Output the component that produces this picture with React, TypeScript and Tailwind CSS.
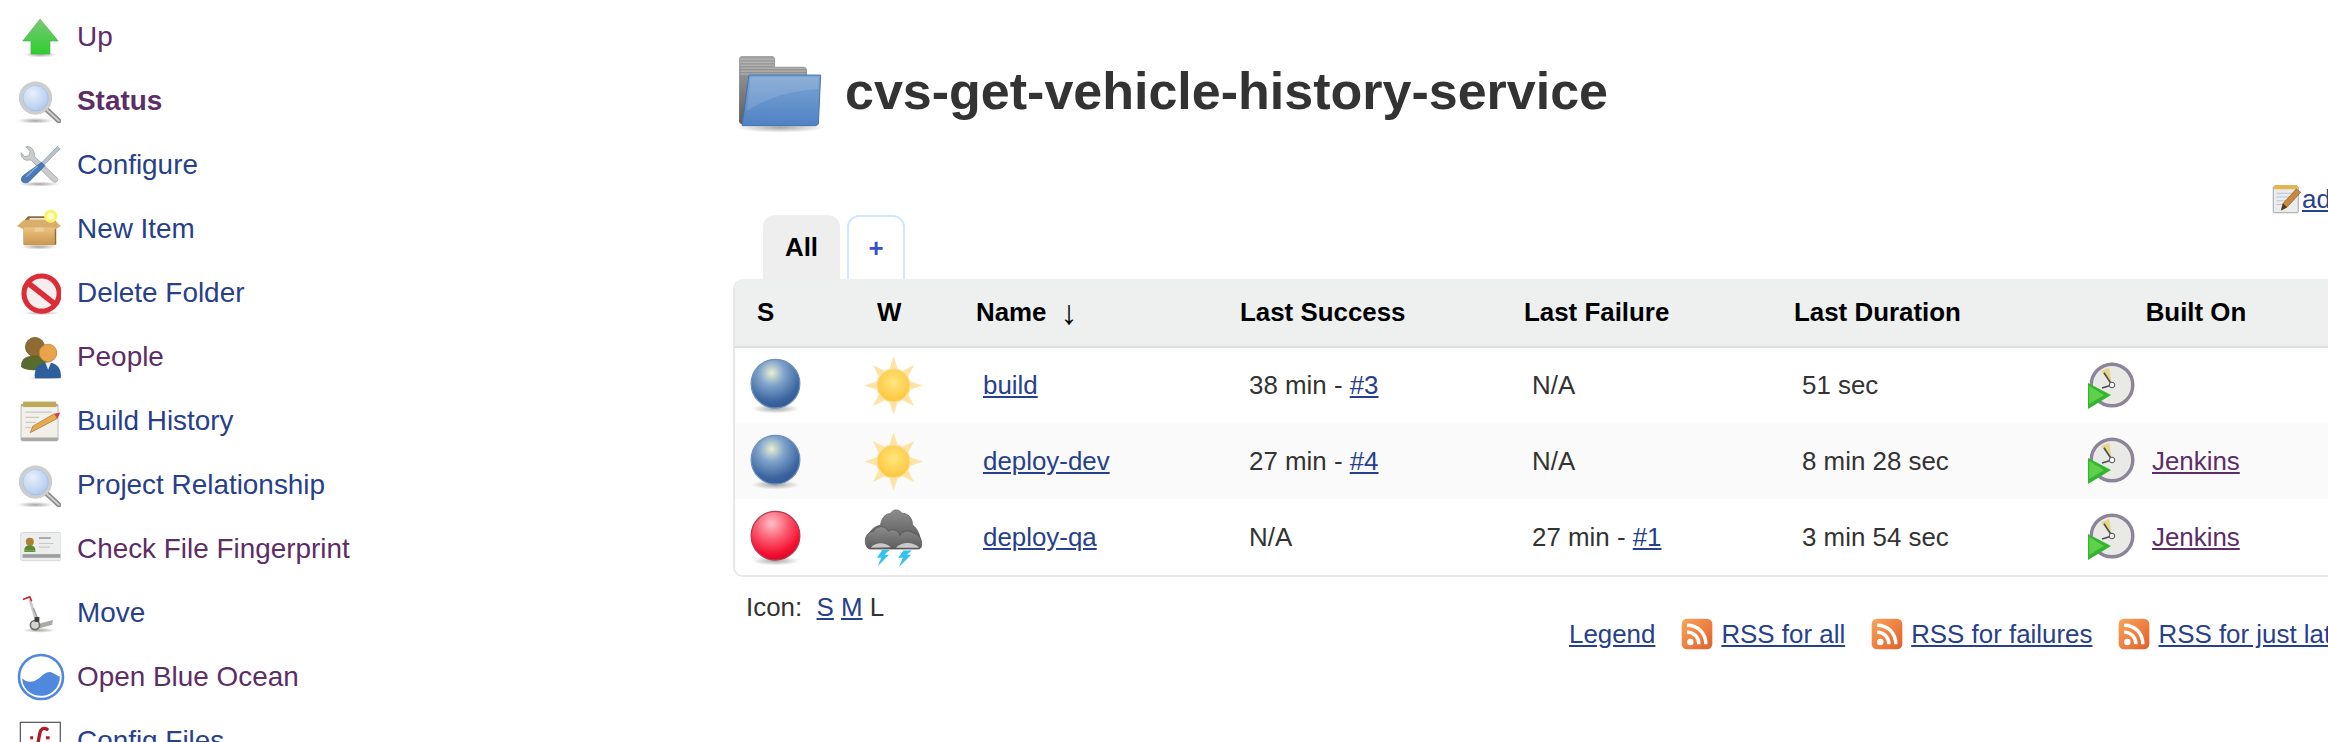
const BLUE = "text-[#27408b]";
const PURPLE = "text-[#5c2d66]";
const SIDE_ICON = "h-[44px] w-[44px] blur-[0.5px]";

function SharedDefs() {
  return (
    <svg className="block h-0 w-0" aria-hidden="true">
      <defs>
        <radialGradient id="shadow" cx="50%" cy="50%" r="50%">
          <stop offset="0%" stopColor="#000" stopOpacity="0.35" />
          <stop offset="100%" stopColor="#000" stopOpacity="0" />
        </radialGradient>
        <linearGradient id="upFill" x1="0" y1="0" x2="0" y2="1">
          <stop offset="0%" stopColor="#79c878" />
          <stop offset="100%" stopColor="#2ecf2e" />
        </linearGradient>
        <radialGradient id="lens" cx="40%" cy="35%" r="70%">
          <stop offset="0%" stopColor="#e6f0fb" />
          <stop offset="100%" stopColor="#a9c6ea" />
        </radialGradient>
        <linearGradient id="boxFill" x1="0" y1="0" x2="0" y2="1">
          <stop offset="0%" stopColor="#eec27e" />
          <stop offset="100%" stopColor="#c9964f" />
        </linearGradient>
        <radialGradient id="blueBall" cx="42%" cy="28%" r="75%">
          <stop offset="0%" stopColor="#e9efd0" />
          <stop offset="35%" stopColor="#7fa3cb" />
          <stop offset="80%" stopColor="#3a649f" />
          <stop offset="100%" stopColor="#34568f" />
        </radialGradient>
        <radialGradient id="redBall" cx="42%" cy="25%" r="75%">
          <stop offset="0%" stopColor="#ffc0c8" />
          <stop offset="45%" stopColor="#fb5a6e" />
          <stop offset="85%" stopColor="#f40e30" />
          <stop offset="100%" stopColor="#d80a2a" />
        </radialGradient>
        <radialGradient id="sunFill" cx="50%" cy="40%" r="60%">
          <stop offset="0%" stopColor="#ffe680" />
          <stop offset="100%" stopColor="#fdc63a" />
        </radialGradient>
        <linearGradient id="cloudFill" x1="0" y1="0" x2="0" y2="1">
          <stop offset="0%" stopColor="#8d8d8d" />
          <stop offset="100%" stopColor="#5c5c5c" />
        </linearGradient>
        <linearGradient id="folderFront" x1="0" y1="0" x2="0" y2="1">
          <stop offset="0%" stopColor="#7ea5d2" />
          <stop offset="100%" stopColor="#4f82c4" />
        </linearGradient>
        <linearGradient id="folderBack" x1="0" y1="0" x2="0" y2="1">
          <stop offset="0%" stopColor="#a3a3a3" />
          <stop offset="100%" stopColor="#5d5d5d" />
        </linearGradient>
        <linearGradient id="rssFill" x1="0" y1="0" x2="1" y2="1">
          <stop offset="0%" stopColor="#f9a45a" />
          <stop offset="100%" stopColor="#e0602c" />
        </linearGradient>
      </defs>
    </svg>
  );
}

function Shadow({ cx = 12, cy = 21.5, rx = 10, ry = 1.8 }) {
  return <ellipse cx={cx} cy={cy} rx={rx} ry={ry} fill="url(#shadow)" />;
}

function UpIcon() {
  return (
    <svg viewBox="0 0 24 24" className={SIDE_ICON}>
      <Shadow cx={12.8} cy={21.6} rx={9} ry={1.6} />
      <path d="M12.6 2.2 22.5 14.2 18 14.2 18 21.3 7.6 21.3 7.6 14.2 3.1 14.2Z" fill="url(#upFill)" stroke="#4ea94e" strokeWidth="0.3" />
    </svg>
  );
}

function SearchIcon() {
  return (
    <svg viewBox="0 0 24 24" className={SIDE_ICON}>
      <Shadow cx={10} cy={22.8} rx={10} ry={1.6} />
      <path d="M16 16.5 22.8 22.8" stroke="#8d8d8d" strokeWidth="2.8" strokeLinecap="round" />
      <path d="M16 16.5 22.8 22.8" stroke="#d0d0d0" strokeWidth="1" strokeLinecap="round" />
      <circle cx="10.1" cy="10.4" r="8.2" fill="url(#lens)" stroke="#cdcdcd" strokeWidth="1.8" />
      <circle cx="10.1" cy="10.4" r="6.9" fill="none" stroke="#a3bcdc" strokeWidth="0.4" />
    </svg>
  );
}

function ConfigureIcon() {
  return (
    <svg viewBox="0 0 24 24" className={SIDE_ICON}>
      <Shadow cy={22.4} rx={11} ry={1.4} />
      <path d="M8.6 3.6C7.8 2.2 6.2 1.7 4.8 2.1L7.2 4.6 6.4 7 4 7.4 2.2 5.2C2 7 3 9 5.2 9.4L7.6 9.2 19.6 21C20.8 22 22.6 21 22.2 19.4L9.6 7.4C9.6 6 9.4 4.8 8.6 3.6Z" fill="#c9cccb" stroke="#a5a9a8" strokeWidth="0.5" />
      <path d="M22.2 1.8 23.4 3.2 14.6 12.2 13.2 11Z" fill="#b9c3d0" stroke="#8e9aa8" strokeWidth="0.4" />
      <path d="M13.4 10.6 15.2 12.4 6.8 20.8C5.6 22 3.6 22 2.8 21 2 20 2.4 18.8 3.4 17.8Z" fill="#4a7bb8" stroke="#2f5a94" strokeWidth="0.4" />
      <path d="M5 18.4 11.2 12.6" stroke="#8cb0dc" strokeWidth="0.7" />
    </svg>
  );
}

function NewItemIcon() {
  return (
    <svg viewBox="0 0 24 24" className={SIDE_ICON}>
      <Shadow cy={21.8} rx={10} ry={1.4} />
      <path d="M3.6 7.6 6 5H19L21.4 8V20.6H3.6Z" fill="#8f6a3a" />
      <path d="M7 6H17L18 9H6Z" fill="#e8e3d8" />
      <path d="M0 10.4 4 7 H20L24 10.4 20.4 12.4H4Z" fill="#d9ad6c" />
      <rect x="3.6" y="11.2" width="17" height="9.6" rx="0.6" fill="url(#boxFill)" />
      <path d="M9.6 11.2H14.6V13.4H9.6Z" fill="#e9cf9e" />
      <circle cx="18.4" cy="5" r="3.6" fill="#f8f36a" />
      <circle cx="18.4" cy="5" r="1.9" fill="#fdfcc2" />
    </svg>
  );
}

function DeleteIcon() {
  return (
    <svg viewBox="0 0 24 24" className={SIDE_ICON}>
      <Shadow cx={13.4} cy={23} rx={10} ry={1} />
      <circle cx="13.4" cy="12.3" r="9.6" fill="#f4eeee" stroke="#dc2c36" strokeWidth="2.8" />
      <path d="M6.4 6.8 20.4 17.8" stroke="#dc2c36" strokeWidth="3" />
    </svg>
  );
}

function PeopleIcon() {
  return (
    <svg viewBox="0 0 24 24" className={SIDE_ICON}>
      <Shadow cx={15} cy={23.4} rx={9} ry={0.8} />
      <path d="M2.2 17C2.2 13 5 11.2 9.8 11.2 14 11.2 17 13 17 17 17 20 3 20 2.2 17Z" fill="#566b2c" />
      <circle cx="9.8" cy="6.5" r="5.2" fill="#8d6b32" stroke="#6e5224" strokeWidth="0.4" />
      <path d="M9.8 23.6C9 19.6 11 15 17 15 22 15 24.6 19 23.8 23.6Z" fill="#2f5e9c" />
      <path d="M15.4 15 17 19 18.6 15Z" fill="#eef2f7" />
      <circle cx="16.9" cy="9.8" r="4.8" fill="#e8a34c" stroke="#b97c2e" strokeWidth="0.4" />
    </svg>
  );
}

function HistoryIcon() {
  return (
    <svg viewBox="0 0 24 24" className={SIDE_ICON}>
      <rect x="2" y="2.6" width="20.6" height="20.4" rx="1" fill="#a9a9a4" />
      <rect x="2.4" y="4" width="19.8" height="17" fill="#f1f0ea" />
      <rect x="3.4" y="1.4" width="18" height="3" fill="#bda958" />
      <path d="M4.6 7.2H19M4.6 10H12M4.6 12.8H10.4M4.6 15.6H7.6" stroke="#c9c9c4" strokeWidth="0.7" />
      <path d="M7.2 18.4 8.6 14.8 20.4 8 22 10.6Z" fill="#e4ab52" stroke="#a9782c" strokeWidth="0.4" />
      <path d="M20.4 8 23.6 7.4 22 10.6Z" fill="#e0364a" />
    </svg>
  );
}

function FingerprintIcon() {
  return (
    <svg viewBox="0 0 24 24" className={SIDE_ICON}>
      <rect x="2" y="3" width="22" height="15.4" rx="1" fill="#eceded" stroke="#cfd0d0" strokeWidth="0.4" />
      <circle cx="7" cy="8" r="2.2" fill="#b07f34" />
      <path d="M4 12.8C4 10.8 5.2 10 7 10S10 10.8 10 12.8Z" fill="#5b8a2f" />
      <rect x="4" y="12.8" width="6" height="0.8" fill="#5b8a2f" />
      <path d="M12 6H18.4" stroke="#9c9c9c" strokeWidth="0.9" />
      <path d="M12 9H20M12 11H18" stroke="#c9c9c9" strokeWidth="0.6" />
      <rect x="3" y="14.8" width="20.6" height="2" fill="#9d9e9e" />
    </svg>
  );
}

function MoveIcon() {
  return (
    <svg viewBox="0 0 24 24" className={SIDE_ICON}>
      <Shadow cx={12} cy={21.4} rx={9} ry={1.4} />
      <path d="M7 4.4 10.4 16" stroke="#c9c9c9" strokeWidth="1.5" />
      <path d="M9 9.4 11.2 15" stroke="#9c9c9c" strokeWidth="0.8" />
      <path d="M3.2 4.6 7 3.2 8 5.6" fill="none" stroke="#c8283c" strokeWidth="0.9" />
      <path d="M11 18.2 19.6 15.8 19.2 18.4 12 20.4Z" fill="#a9aaa6" />
      <circle cx="9.8" cy="18.6" r="2.5" fill="#d3d4d0" stroke="#6e6f6b" strokeWidth="0.9" />
      <rect x="9.6" y="14.2" width="2.6" height="2.6" fill="#3f3f3f" />
    </svg>
  );
}

function OceanIcon() {
  return (
    <svg viewBox="0 0 24 24" className="h-[48px] w-[48px]">
      <circle cx="12" cy="12" r="11" fill="#fff" stroke="#4f88dc" strokeWidth="1.3" />
      <path d="M2.6 12.6C5 15 8 15 11 12.6 13 11 15 9 17 9.6 19 10.2 20 11.6 21.4 11.6 21.6 17 17.4 21.4 12 21.4 6.6 21.4 2.6 17.4 2.6 12.6Z" fill="#4f88dc" />
    </svg>
  );
}

function ConfigFilesIcon() {
  return (
    <svg viewBox="0 0 24 24" className="h-[44px] w-[44px]">
      <rect x="1.8" y="1.8" width="21.8" height="22" fill="#fff" stroke="#444" strokeWidth="0.6" />
      <path d="M16.4 5.6C14.4 4.4 12.8 5.4 12.4 8L10.6 17.6C10.2 20 8.8 20.8 7 19.6" fill="none" stroke="#b01c22" strokeWidth="1.8" strokeLinecap="round" />
      <path d="M7.2 10.2H8.8M15.8 10.2H17.8" stroke="#b01c22" strokeWidth="1.6" />
    </svg>
  );
}

function FolderIcon() {
  return (
    <svg viewBox="0 0 48 48" className="h-[89px] w-[89px] blur-[0.4px]">
      <ellipse cx="24.5" cy="41.8" rx="24" ry="2.8" fill="url(#shadow)" />
      <path d="M2.2 4.6C2.2 3.8 3 3.2 4 3.2H20C21 3.2 21.6 4 21.6 5V9H37C38.2 9 38.8 9.8 38.8 11V15H7V40H4C3 40 2.2 39.4 2.2 38.6Z" fill="url(#folderBack)" />
      <path d="M3 5H21M3 6.6H21M3 8.2H21M3 9.8H38M3 11.4H38M3 13H38" stroke="#bcbcbc" strokeWidth="0.5" />
      <path d="M7.5 13.5H46.2L45 39.4C44.9 40.2 44.2 40.8 43.4 40.8H3.8Z" fill="url(#folderFront)" stroke="#3e6fb0" strokeWidth="0.5" />
      <path d="M8.4 14.6H45.2L44.8 21C30 22 16 26 6.4 33Z" fill="#fff" fillOpacity="0.12" />
    </svg>
  );
}

function Ball({ color }: { color: "blue" | "red" }) {
  return (
    <svg viewBox="0 0 32 32" className="h-[59px] w-[59px]">
      <ellipse cx="16" cy="28.6" rx="13" ry="2.6" fill="url(#shadow)" />
      <circle
        cx="16"
        cy="15"
        r="13.2"
        fill={color === "blue" ? "url(#blueBall)" : "url(#redBall)"}
        stroke={color === "blue" ? "#6d8fbe" : "#b63a50"}
        strokeWidth="0.7"
      />
    </svg>
  );
}

function SunIcon() {
  const rays = [0, 45, 90, 135, 180, 225, 270, 315];
  return (
    <svg viewBox="0 0 32 32" className="h-[59px] w-[59px]">
      {rays.map((angle) => (
        <path
          key={angle}
          d="M16 0.2 18.4 7.4H13.6Z"
          fill="#fde3a6"
          transform={`rotate(${angle} 16 16)`}
        />
      ))}
      <circle cx="16" cy="16" r="9.4" fill="#fde3a6" />
      <circle cx="16" cy="16" r="8.6" fill="url(#sunFill)" stroke="#fdd06a" strokeWidth="0.4" />
    </svg>
  );
}

function StormIcon() {
  return (
    <svg viewBox="0 0 32 32" className="h-[59px] w-[59px] blur-[0.3px]">
      <g transform="translate(-0.5 -1) scale(1.05 1.28)">
        <path d="M9 8C9.6 4.6 12 3 14 3.2 15.4 1.2 18.4 1 20 3 23 2.8 25.6 5 25.6 8 28 9.4 29.8 12.6 29.4 14.6L3 14.6C2.2 12 4 9 9 8Z" fill="url(#cloudFill)" stroke="#555" strokeWidth="0.3" />
        <path d="M1.2 15.4C0.8 12.6 3 10.6 5.4 10.8 7 8 11.6 8 13 10.6 15 9.4 18.4 10 19 12.4 20 10.4 24 9.8 26 11.4 29 11.8 30.6 14 30.2 16.8 30 18 29 18.2 28 18.2H4C2.4 18.2 1.4 17 1.2 15.4Z" fill="url(#cloudFill)" stroke="#4a4a4a" strokeWidth="0.3" />
        <path d="M4 17.6C6 15.4 11 15 14.4 17.4ZM17 17.6C20 15 26 15 29 17.6Z" fill="#c9c9c9" />
      </g>
      <path d="M10 22.6 7 27H9.4L7.4 31.6 13.6 25.4H11L14 22.6Z" fill="#34c2ee" />
      <path d="M21.4 23 18.6 27H21L19 32 25.6 25.4H23.2L26 23Z" fill="#34c2ee" />
    </svg>
  );
}

function ClockIcon() {
  return (
    <svg viewBox="0 0 24 24" className="h-[48px] w-[48px] shrink-0 blur-[0.5px]">
      <circle cx="12" cy="11.5" r="10.4" fill="#e9e9e6" stroke="#8c8499" strokeWidth="1.7" />
      <path d="M12 11.5 10.6 3 6.4 4.6Z" fill="#e4d68a" />
      <path d="M12 11.5 8 5.4M12 11.5 7 13" stroke="#4d4d4d" strokeWidth="0.8" />
      <circle cx="12" cy="11.5" r="1.4" fill="#fff" stroke="#555" strokeWidth="0.5" />
      <path d="M0 10.5 11.5 16.5 0 23.5Z" fill="#33b52f" />
      <path d="M0.6 12 8 16.5 0.6 21Z" fill="#5ed04a" />
    </svg>
  );
}

function NotepadIcon() {
  return (
    <svg viewBox="0 0 24 24" className="h-[30px] w-[30px] shrink-0">
      <rect x="1" y="2" width="20" height="21" rx="1" fill="#e9edf0" stroke="#999" strokeWidth="0.7" />
      <rect x="1.6" y="0.8" width="18.8" height="3.4" rx="1" fill="#e3b654" />
      <path d="M3.6 7.4H18M3.6 10.4H14M3.6 13.4H11M3.6 16.4H9" stroke="#bcc4cc" strokeWidth="0.8" />
      <path d="M7.4 21 8.8 15.6 19.4 4 23 6.6 12 18.6Z" fill="#c9893a" stroke="#7c5420" strokeWidth="0.5" />
      <path d="M7.4 21 8.8 15.6 12 18.6Z" fill="#50361a" />
    </svg>
  );
}

function RssIcon() {
  return (
    <svg viewBox="0 0 24 24" className="h-[32px] w-[32px] shrink-0">
      <rect x="0.5" y="0.5" width="23" height="23" rx="4" fill="url(#rssFill)" />
      <circle cx="7" cy="18" r="2.4" fill="#fff" />
      <path d="M4.6 10.6C9.6 10.6 13.4 14.4 13.4 19.6" fill="none" stroke="#fff" strokeWidth="2.6" />
      <path d="M4.6 5.4C12.6 5.4 18.6 11.4 18.6 19.6" fill="none" stroke="#fff" strokeWidth="2.6" />
    </svg>
  );
}

const sideItems = [
  { label: "Up", icon: <UpIcon />, color: PURPLE },
  { label: "Status", icon: <SearchIcon />, color: PURPLE, bold: true },
  { label: "Configure", icon: <ConfigureIcon />, color: BLUE },
  { label: "New Item", icon: <NewItemIcon />, color: BLUE },
  { label: "Delete Folder", icon: <DeleteIcon />, color: BLUE },
  { label: "People", icon: <PeopleIcon />, color: PURPLE },
  { label: "Build History", icon: <HistoryIcon />, color: BLUE },
  { label: "Project Relationship", icon: <SearchIcon />, color: BLUE },
  { label: "Check File Fingerprint", icon: <FingerprintIcon />, color: PURPLE },
  { label: "Move", icon: <MoveIcon />, color: BLUE },
  { label: "Open Blue Ocean", icon: <OceanIcon />, color: PURPLE },
  { label: "Config Files", icon: <ConfigFilesIcon />, color: BLUE },
];

function Sidebar() {
  return (
    <div className="flex w-[733px] shrink-0 flex-col pt-[5px] pl-[17px] text-[27.9px]">
      {sideItems.map((item) => (
        <div key={item.label} className="flex h-[64px] shrink-0 items-center">
          <div className="flex w-[60px] shrink-0 items-center">{item.icon}</div>
          <span className={`${item.color} ${item.bold ? "font-bold" : ""}`}>
            {item.label}
          </span>
        </div>
      ))}
    </div>
  );
}

function Link({ children, color = BLUE }: { children: React.ReactNode; color?: string }) {
  return <a className={`${color} underline`}>{children}</a>;
}

function BuiltOn({ node }: { node?: string }) {
  return (
    <div className="flex items-center gap-[16px]">
      <ClockIcon />
      {node && <Link color={PURPLE}>{node}</Link>}
    </div>
  );
}

const rows = [
  {
    name: "build",
    ball: "blue" as const,
    weather: <SunIcon />,
    success: <>38 min - <Link>#3</Link></>,
    failure: <>N/A</>,
    duration: "51 sec",
    node: undefined,
  },
  {
    name: "deploy-dev",
    ball: "blue" as const,
    weather: <SunIcon />,
    success: <>27 min - <Link>#4</Link></>,
    failure: <>N/A</>,
    duration: "8 min 28 sec",
    node: "Jenkins",
  },
  {
    name: "deploy-qa",
    ball: "red" as const,
    weather: <StormIcon />,
    success: <>N/A</>,
    failure: <>27 min - <Link>#1</Link></>,
    duration: "3 min 54 sec",
    node: "Jenkins",
  },
];

function JobTable() {
  const headerCell = "pl-[16px] text-left font-bold text-black";
  return (
    <div className="w-[1700px] overflow-hidden rounded-[10px] border-2 border-t-0 border-[#e8e8e8]">
      <table className="w-full table-fixed border-collapse text-[25.9px] text-[#333]">
        <colgroup>
          <col className="w-[126px]" />
          <col className="w-[99px]" />
          <col className="w-[264px]" />
          <col className="w-[284px]" />
          <col className="w-[270px]" />
          <col className="w-[302px]" />
          <col className="w-[232px]" />
          <col />
        </colgroup>
        <thead>
          <tr className="h-[68px] border-b-2 border-[#dcdfdf] bg-[#eef0f0]">
            <th className="pl-[22px] text-left font-bold text-black">S</th>
            <th className={headerCell}>W</th>
            <th className={headerCell}>
              <span className="flex items-center">
                Name
                <span className="ml-[14px] text-[34px] leading-none font-normal">↓</span>
              </span>
            </th>
            <th className={headerCell}>Last Success</th>
            <th className={headerCell}>Last Failure</th>
            <th className={headerCell}>Last Duration</th>
            <th className="text-center font-bold text-black">Built On</th>
            <th />
          </tr>
        </thead>
        <tbody>
          {rows.map((row, index) => (
            <tr key={row.name} className={`h-[76px] ${index === 1 ? "bg-[#fafafa]" : "bg-white"}`}>
              <td className="pl-[11px]">
                <Ball color={row.ball} />
              </td>
              <td className="pl-[3px]">{row.weather}</td>
              <td className="pl-[23px]">
                <Link>{row.name}</Link>
              </td>
              <td className="pl-[25px]">{row.success}</td>
              <td className="pl-[24px]">{row.failure}</td>
              <td className="pl-[24px]">{row.duration}</td>
              <td className="pl-[8px]">
                <BuiltOn node={row.node} />
              </td>
              <td />
            </tr>
          ))}
        </tbody>
      </table>
    </div>
  );
}

function Tabs() {
  return (
    <div className="ml-[30px] flex h-[64px] gap-[7px] text-[25.9px]">
      <div className="flex w-[77px] items-center justify-center rounded-t-[12px] bg-[#eeeeee] font-bold text-black">
        All
      </div>
      <div className="flex w-[58px] items-center justify-center rounded-t-[12px] border-2 border-b-0 border-[#cfe8ff] font-bold text-[#3b4fd1]">
        +
      </div>
    </div>
  );
}

function Footer() {
  return (
    <div className="flex whitespace-nowrap text-[25.9px] text-[#333]">
      <div className="w-[836px] shrink-0 pt-[11px] pl-[13px]">
        Icon: &nbsp;<Link>S</Link> <Link>M</Link> L
      </div>
      <div className="flex shrink-0 items-center pt-[38px]">
        <Link>Legend</Link>
        <div className="ml-[26px] flex items-center gap-[8px]">
          <RssIcon />
          <Link>RSS for all</Link>
        </div>
        <div className="ml-[26px] flex items-center gap-[8px]">
          <RssIcon />
          <Link>RSS for failures</Link>
        </div>
        <div className="ml-[26px] flex items-center gap-[8px]">
          <RssIcon />
          <Link>RSS for just latest builds</Link>
        </div>
      </div>
    </div>
  );
}

export default function App() {
  return (
    <div className="flex h-[742px] w-[2328px] overflow-hidden bg-white font-['Liberation_Sans',Arial,sans-serif]">
      <SharedDefs />
      <Sidebar />
      <div className="min-w-0 flex-1 overflow-hidden">
        <div className="flex items-center gap-[21px] pt-[50px] pl-[2px]">
          <FolderIcon />
          <h1 className="mb-[8px] text-[52px] font-bold whitespace-nowrap text-[#333]">
            cvs-get-vehicle-history-service
          </h1>
        </div>
        <div className="mt-[44px] ml-[1539px] flex h-[32px] items-center whitespace-nowrap text-[25.9px]">
          <NotepadIcon />
          <Link>add description</Link>
        </div>
        <Tabs />
        <JobTable />
        <Footer />
      </div>
    </div>
  );
}
